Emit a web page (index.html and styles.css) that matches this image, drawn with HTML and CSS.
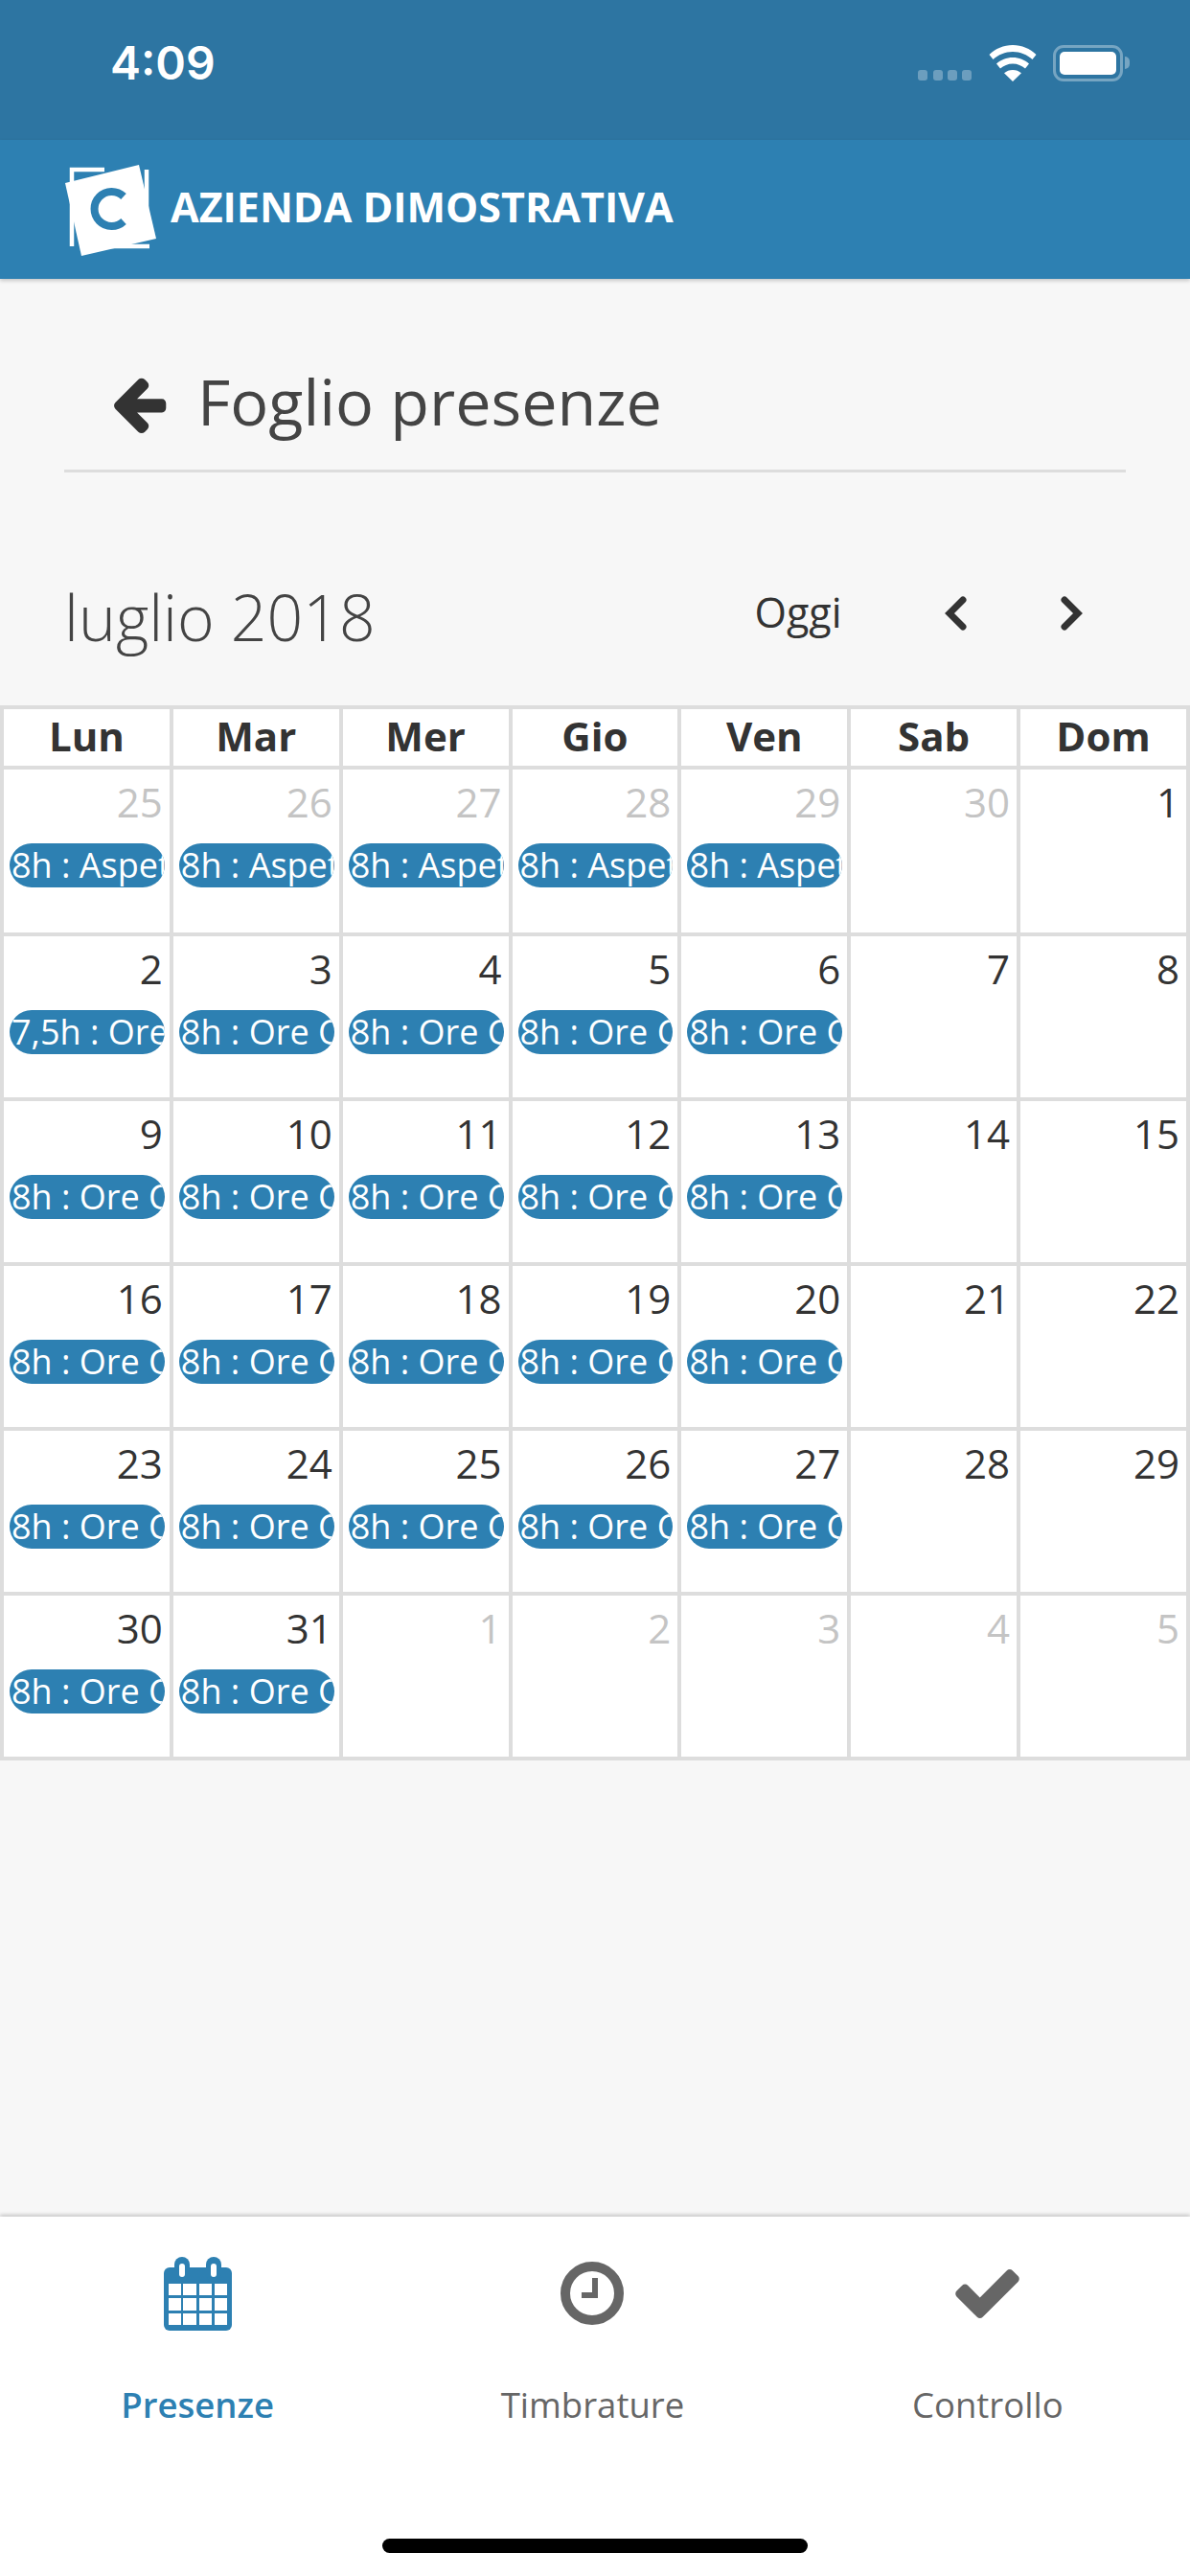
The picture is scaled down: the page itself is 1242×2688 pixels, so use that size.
FILE: index.html
```html
<!DOCTYPE html>
<html lang="it">
<head>
  <meta charset="UTF-8" />
  <title>Foglio presenze</title>
  <link rel="stylesheet" href="styles.css">
</head>
<body>
  <div class="status-bar">
    <span class="status-time">4:09</span>
    <div class="status-icons">
      <svg class="status-signal" width="56" height="11" viewBox="0 0 56 11"><rect width="10" height="11" rx="3"/><rect x="16" width="10" height="11" rx="3"/><rect x="31" width="10" height="11" rx="3"/><rect x="46" width="10" height="11" rx="3"/></svg>
      <svg class="status-wifi" width="50" height="38" viewBox="0 0 50 38"><path d="M25 0C15.500 0 7 3.800 .5 10l4 5C10 10 17 7 25 7s15 3 20.500 8l4-5C43 3.800 34.500 0 25 0zM25 13c-6.500 0-12.500 2.500-17 6.500l4 5c3.500-3 8-5 13-5s9.500 2 13 5l4-5c-4.500-4-10.500-6.500-17-6.500zM25 26c-3.500 0-6.500 1.200-9 3.300L25 38l9-8.700c-2.500-2.100-5.500-3.300-9-3.300z"/></svg>
      <div class="status-battery"><div class="status-battery-fill"></div></div>
      <div class="status-battery-nub"></div>
    </div>
  </div>

  <header class="app-header">
    <svg class="logo" width="100" height="100" viewBox="0 0 100 100">
      <path class="logo-frame" d="M43 8H9V88M36 88H90M87 70V8" />
      <path class="logo-sheet" d="M2 22L79 3 97 80 19 98z" />
      <path class="logo-c" d="M63 36A18 18 0 1 0 63 62" />
    </svg>
    <span class="app-title">AZIENDA DIMOSTRATIVA</span>
  </header>

  <main class="content">
    <div class="page-title">
      <svg class="back-arrow" width="66" height="66" viewBox="0 0 1792 1792"><path d="M1664 896v128q0 53-32.500 90.500t-84.500 37.500h-704l293 294q38 36 38 90t-38 90l-75 76q-38 38-90 38-53 0-91-38l-651-652q-38-36-38-90 0-53 38-91l651-650q38-38 91-38 52 0 90 38l75 74q38 38 38 91t-38 91l-293 293h704q52 0 84.500 37.500t32.500 90.500z"/></svg>
      <h1>Foglio presenze</h1>
    </div>

    <div class="cal-toolbar">
      <h2>luglio 2018</h2>
      <span class="cal-today">Oggi</span>
      <svg class="cal-nav cal-prev" width="26" height="36" viewBox="0 0 26 36"><path d="M20 4L6 18l14 14"/></svg>
      <svg class="cal-nav" width="26" height="36" viewBox="0 0 26 36"><path d="M6 4l14 14L6 32"/></svg>
    </div>

    <table class="calendar">
      <thead>
        <tr><th>Lun</th><th>Mar</th><th>Mer</th><th>Gio</th><th>Ven</th><th>Sab</th><th>Dom</th></tr>
      </thead>
      <tbody>
        <tr class="week-first">
          <td><div class="day-number day-other">25</div><div class="event">8h : Aspet</div></td>
          <td><div class="day-number day-other">26</div><div class="event">8h : Aspet</div></td>
          <td><div class="day-number day-other">27</div><div class="event">8h : Aspet</div></td>
          <td><div class="day-number day-other">28</div><div class="event">8h : Aspet</div></td>
          <td><div class="day-number day-other">29</div><div class="event">8h : Aspet</div></td>
          <td><div class="day-number day-other">30</div></td>
          <td><div class="day-number">1</div></td>
        </tr>
        <tr>
          <td><div class="day-number">2</div><div class="event">7,5h : Ore</div></td>
          <td><div class="day-number">3</div><div class="event">8h : Ore O</div></td>
          <td><div class="day-number">4</div><div class="event">8h : Ore O</div></td>
          <td><div class="day-number">5</div><div class="event">8h : Ore O</div></td>
          <td><div class="day-number">6</div><div class="event">8h : Ore O</div></td>
          <td><div class="day-number">7</div></td>
          <td><div class="day-number">8</div></td>
        </tr>
        <tr>
          <td><div class="day-number">9</div><div class="event">8h : Ore O</div></td>
          <td><div class="day-number">10</div><div class="event">8h : Ore O</div></td>
          <td><div class="day-number">11</div><div class="event">8h : Ore O</div></td>
          <td><div class="day-number">12</div><div class="event">8h : Ore O</div></td>
          <td><div class="day-number">13</div><div class="event">8h : Ore O</div></td>
          <td><div class="day-number">14</div></td>
          <td><div class="day-number">15</div></td>
        </tr>
        <tr>
          <td><div class="day-number">16</div><div class="event">8h : Ore O</div></td>
          <td><div class="day-number">17</div><div class="event">8h : Ore O</div></td>
          <td><div class="day-number">18</div><div class="event">8h : Ore O</div></td>
          <td><div class="day-number">19</div><div class="event">8h : Ore O</div></td>
          <td><div class="day-number">20</div><div class="event">8h : Ore O</div></td>
          <td><div class="day-number">21</div></td>
          <td><div class="day-number">22</div></td>
        </tr>
        <tr>
          <td><div class="day-number">23</div><div class="event">8h : Ore O</div></td>
          <td><div class="day-number">24</div><div class="event">8h : Ore O</div></td>
          <td><div class="day-number">25</div><div class="event">8h : Ore O</div></td>
          <td><div class="day-number">26</div><div class="event">8h : Ore O</div></td>
          <td><div class="day-number">27</div><div class="event">8h : Ore O</div></td>
          <td><div class="day-number">28</div></td>
          <td><div class="day-number">29</div></td>
        </tr>
        <tr>
          <td><div class="day-number">30</div><div class="event">8h : Ore O</div></td>
          <td><div class="day-number">31</div><div class="event">8h : Ore O</div></td>
          <td><div class="day-number day-other">1</div></td>
          <td><div class="day-number day-other">2</div></td>
          <td><div class="day-number day-other">3</div></td>
          <td><div class="day-number day-other">4</div></td>
          <td><div class="day-number day-other">5</div></td>
        </tr>
      </tbody>
    </table>
  </main>

  <nav class="tab-bar">
    <div class="tab tab-active">
      <div class="tab-icon">
        <svg width="71" height="77" viewBox="0 0 71 77">
          <rect y="11" width="71" height="66" rx="6" fill="#2d80b2"/>
          <rect x="11" width="16" height="26" rx="8" fill="#2d80b2"/>
          <rect x="44" width="16" height="26" rx="8" fill="#2d80b2"/>
          <g fill="#fff">
            <rect x="16" y="7" width="6" height="14" rx="3"/><rect x="49" y="7" width="6" height="14" rx="3"/>
            <rect x="5" y="28" width="13" height="12"/><rect x="20" y="28" width="14" height="12"/><rect x="37" y="28" width="13" height="12"/><rect x="53" y="28" width="13" height="12"/>
            <rect x="5" y="43" width="13" height="13"/><rect x="20" y="43" width="14" height="13"/><rect x="37" y="43" width="13" height="13"/><rect x="53" y="43" width="13" height="13"/>
            <rect x="5" y="59" width="13" height="12"/><rect x="20" y="59" width="14" height="12"/><rect x="37" y="59" width="13" height="12"/><rect x="53" y="59" width="13" height="12"/>
          </g>
        </svg>
      </div>
      <span>Presenze</span>
    </div>
    <div class="tab">
      <div class="tab-icon">
        <svg width="66" height="66" viewBox="0 0 66 66">
          <circle cx="33" cy="33" r="28" fill="none" stroke="#666" stroke-width="10"/>
          <path fill="#666" d="M33 17h6v21H22v-6h11z"/>
        </svg>
      </div>
      <span>Timbrature</span>
    </div>
    <div class="tab">
      <div class="tab-icon">
        <svg width="67" height="51" viewBox="121 -6 1550 1188"><path fill="#666" d="M1671 226q0 40-28 68l-724 724-136 136q-28 28-68 28t-68-28l-136-136-362-362q-28-28-28-68t28-68l136-136q28-28 68-28t68 28l294 295 656-657q28-28 68-28t68 28l136 136q28 28 28 68z"/></svg>
      </div>
      <span>Controllo</span>
    </div>
    <div class="home-bar"></div>
  </nav>
</body>
</html>
```

FILE: styles.css
```css
* { box-sizing: border-box; margin: 0; padding: 0; }

body {
  width: 1242px;
  height: 2688px;
  display: flex;
  flex-direction: column;
  font-family: 'Open Sans', sans-serif;
  background: #f7f7f7;
  color: #333;
  overflow: hidden;
}

.status-bar {
  height: 146px;
  flex: none;
  background: #2d75a2;
  color: #fff;
  display: flex;
  justify-content: space-between;
  padding: 38px 63px 0 115px;
}
.status-time {
  font-family: Inter, sans-serif;
  font-size: 48px;
  font-weight: 600;
  line-height: 56px;
}
.status-icons {
  display: flex;
  align-items: flex-start;
  padding-top: 9px;
}
.status-signal { fill: rgba(255,255,255,0.3); margin-top: 26px; margin-right: 18px; }
.status-wifi { fill: #fff; margin-right: 17px; }
.status-battery {
  width: 73px;
  height: 38px;
  padding: 4px;
  border: 3px solid rgba(255,255,255,0.35);
  border-radius: 11px;
}
.status-battery-fill {
  height: 100%;
  background: #fff;
  border-radius: 5px;
}
.status-battery-nub {
  width: 5px;
  height: 13px;
  margin: 12px 0 0 2px;
  background: rgba(255,255,255,0.35);
  border-radius: 0 6px 6px 0;
}

.app-header {
  height: 145px;
  flex: none;
  background: #2d80b2;
  box-shadow: 0 2px 4px rgba(0,0,0,0.2);
  display: flex;
  align-items: center;
  padding-left: 66px;
  color: #fff;
}
.logo { margin-right: 12px; flex: none; }
.logo-frame { fill: none; stroke: #fff; stroke-width: 4.500; }
.logo-sheet { fill: #fff; }
.logo-c { fill: none; stroke: #2d80b2; stroke-width: 8; }
.app-title {
  font-size: 43px;
  font-weight: 700;
  margin-bottom: 7px;
}

.content { flex: 1; }

.page-title {
  margin: 0 67px;
  height: 202px;
  padding: 82px 0 0 45px;
  border-bottom: 3px solid #ddd;
  display: flex;
  align-items: flex-start;
}
.back-arrow { fill: #333; margin-top: 15px; margin-right: 28px; }
.page-title h1 {
  font-size: 66.500px;
  font-weight: 400;
  color: #444;
  line-height: 90px;
}

.cal-toolbar {
  display: flex;
  align-items: center;
  height: 120px;
  margin-top: 90px;
  padding-left: 67px;
}
.cal-toolbar h2 {
  font-size: 66px;
  font-weight: 300;
  color: #444;
  margin-right: 396px;
}
.cal-today {
  font-size: 43px;
  margin-right: 106px;
  margin-bottom: 10px;
}
.cal-nav {
  fill: none;
  stroke: #333;
  stroke-width: 7;
  stroke-linecap: round;
  margin-bottom: 6px;
}
.cal-prev { margin-right: 94px; }

.calendar {
  width: 1242px;
  margin-top: 33px;
  border-collapse: collapse;
  table-layout: fixed;
  background: #fff;
}
.calendar th, .calendar td {
  border: 4px solid #ddd;
}
.calendar th {
  height: 62px;
  padding-bottom: 3px;
  font-size: 42px;
  line-height: 56px;
  font-weight: 700;
}
.calendar td {
  height: 172px;
  vertical-align: top;
}
.calendar .week-first td { height: 174px; }
.day-number {
  font-size: 42px;
  line-height: 58px;
  margin-top: 5px;
  padding-right: 7px;
  text-align: right;
}
.day-other { color: #c4c4c4; }
.event {
  height: 46px;
  margin: 14px 5px 0 6px;
  padding-left: 2px;
  background: #2d80b2;
  border-radius: 23px;
  color: #fff;
  font-size: 36px;
  line-height: 46px;
  white-space: nowrap;
  overflow: hidden;
}

.tab-bar {
  position: relative;
  height: 375px;
  flex: none;
  background: #fff;
  box-shadow: 0 -2px 4px rgba(0,0,0,0.2);
  display: flex;
  padding-right: 5px;
}
.tab {
  flex: 1;
  padding-top: 40px;
  text-align: center;
  font-size: 36.500px;
  color: #666;
}
.tab-icon {
  height: 80px;
  margin-bottom: 51px;
  display: flex;
  align-items: center;
  justify-content: center;
}
.tab-active { color: #2d80b2; font-weight: 600; }

.home-bar {
  position: absolute;
  left: 399px;
  bottom: 24px;
  width: 444px;
  height: 15px;
  background: #000;
  border-radius: 8px;
}
```
